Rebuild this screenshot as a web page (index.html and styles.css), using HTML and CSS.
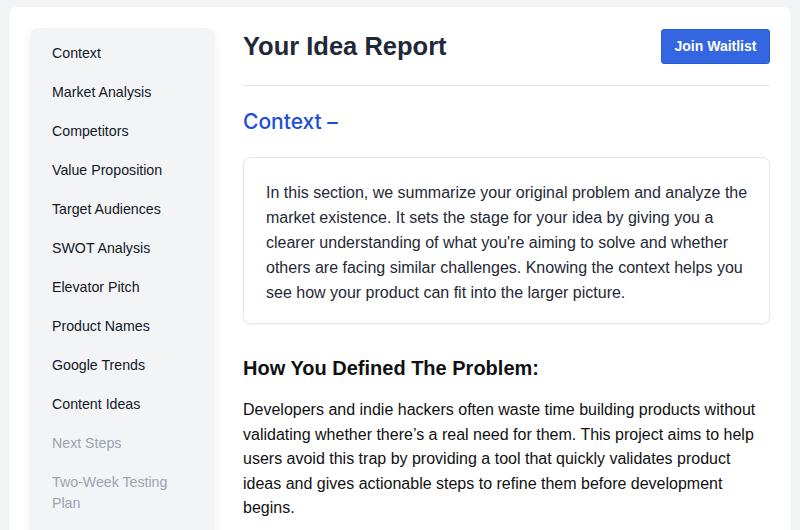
FILE: index.html
```html
<!DOCTYPE html>
<html lang="en">
<head>
<meta charset="utf-8">
<title>Your Idea Report</title>
<link rel="stylesheet" href="styles.css">
</head>
<body>
<div class="page">
  <div class="card">
    <aside class="sidebar">
      <nav class="nav">
        <a class="nav-item">Context</a>
        <a class="nav-item">Market Analysis</a>
        <a class="nav-item">Competitors</a>
        <a class="nav-item">Value Proposition</a>
        <a class="nav-item">Target Audiences</a>
        <a class="nav-item">SWOT Analysis</a>
        <a class="nav-item">Elevator Pitch</a>
        <a class="nav-item">Product Names</a>
        <a class="nav-item">Google Trends</a>
        <a class="nav-item">Content Ideas</a>
        <a class="nav-item disabled">Next Steps</a>
        <a class="nav-item disabled">Two-Week Testing Plan</a>
      </nav>
    </aside>
    <main class="main">
      <header class="header">
        <h1 class="title">Your Idea Report</h1>
        <button class="btn">Join Waitlist</button>
      </header>
      <h2 class="section-title">Context –</h2>
      <div class="info-box">
        <p>In this section, we summarize your original problem and analyze the market existence. It sets the stage for your idea by giving you a clearer understanding of what you're aiming to solve and whether others are facing similar challenges. Knowing the context helps you see how your product can fit into the larger picture.</p>
      </div>
      <h3 class="sub-title">How You Defined The Problem:</h3>
      <p class="body-text">Developers and indie hackers often waste time building products without validating whether there’s a real need for them. This project aims to help users avoid this trap by providing a tool that quickly validates product ideas and gives actionable steps to refine them before development begins.</p>
    </main>
  </div>
</div>
</body>
</html>
```

FILE: styles.css
```css
* { box-sizing: border-box; }
html, body {
  margin: 0;
  padding: 0;
  background: #f3f4f6;
  font-family: "Liberation Sans", Arial, sans-serif;
  color: #1f2937;
  height: 530px;
  overflow: hidden;
}
.page {
  padding: 7px 9px 0 9px;
}
.card {
  background: #ffffff;
  border-radius: 7px;
  box-shadow: 0 1px 3px rgba(0,0,0,0.05);
  padding: 21px 21px 0 21px;
  display: flex;
  gap: 28px;
  min-height: 560px;
}
.sidebar {
  width: 185px;
  flex: none;
  background: #f3f4f6;
  border-radius: 8px;
  box-shadow: 0 4px 12px rgba(0,0,0,0.06);
  padding: 6px 22px 0 22px;
}
.nav {
  display: flex;
  flex-direction: column;
}
.nav-item {
  display: block;
  font-size: 14.2px;
  line-height: 21px;
  padding: 9px 0;
  color: #111827;
}
.nav-item.disabled {
  color: #9ca3af;
}
.main {
  flex: 1;
  min-width: 0;
}
.header {
  display: flex;
  align-items: center;
  justify-content: space-between;
  padding-bottom: 21px;
  border-bottom: 1px solid #e5e7eb;
}
.title {
  margin: 0;
  font-size: 25.5px;
  line-height: 36px;
  font-weight: 700;
  color: #1f2937;
}
.btn {
  font-family: inherit;
  font-size: 14px;
  font-weight: 700;
  color: #ffffff;
  background: #3366e0;
  border: 1px solid #2a5bd7;
  border-radius: 3px;
  width: 109px;
  height: 35px;
  padding: 0;
}
.section-title {
  margin: 22px 0 21px 0;
  font-family: Inter, "Liberation Sans", sans-serif;
  font-size: 21px;
  line-height: 28px;
  font-weight: 500;
  color: #1d4ed8;
}
.info-box {
  border: 1px solid #e5e7eb;
  border-radius: 7px;
  box-shadow: 0 1px 2px rgba(0,0,0,0.05);
  padding: 22px 14px 18px 22px;
}
.info-box p {
  margin: 0;
  font-size: 16px;
  line-height: 25px;
  color: #1f2937;
}
.sub-title {
  margin: 30px 0 16px 0;
  font-size: 20px;
  line-height: 28px;
  font-weight: 700;
  color: #111111;
}
.body-text {
  margin: 0;
  font-size: 16px;
  line-height: 24.5px;
  color: #111111;
}
```
